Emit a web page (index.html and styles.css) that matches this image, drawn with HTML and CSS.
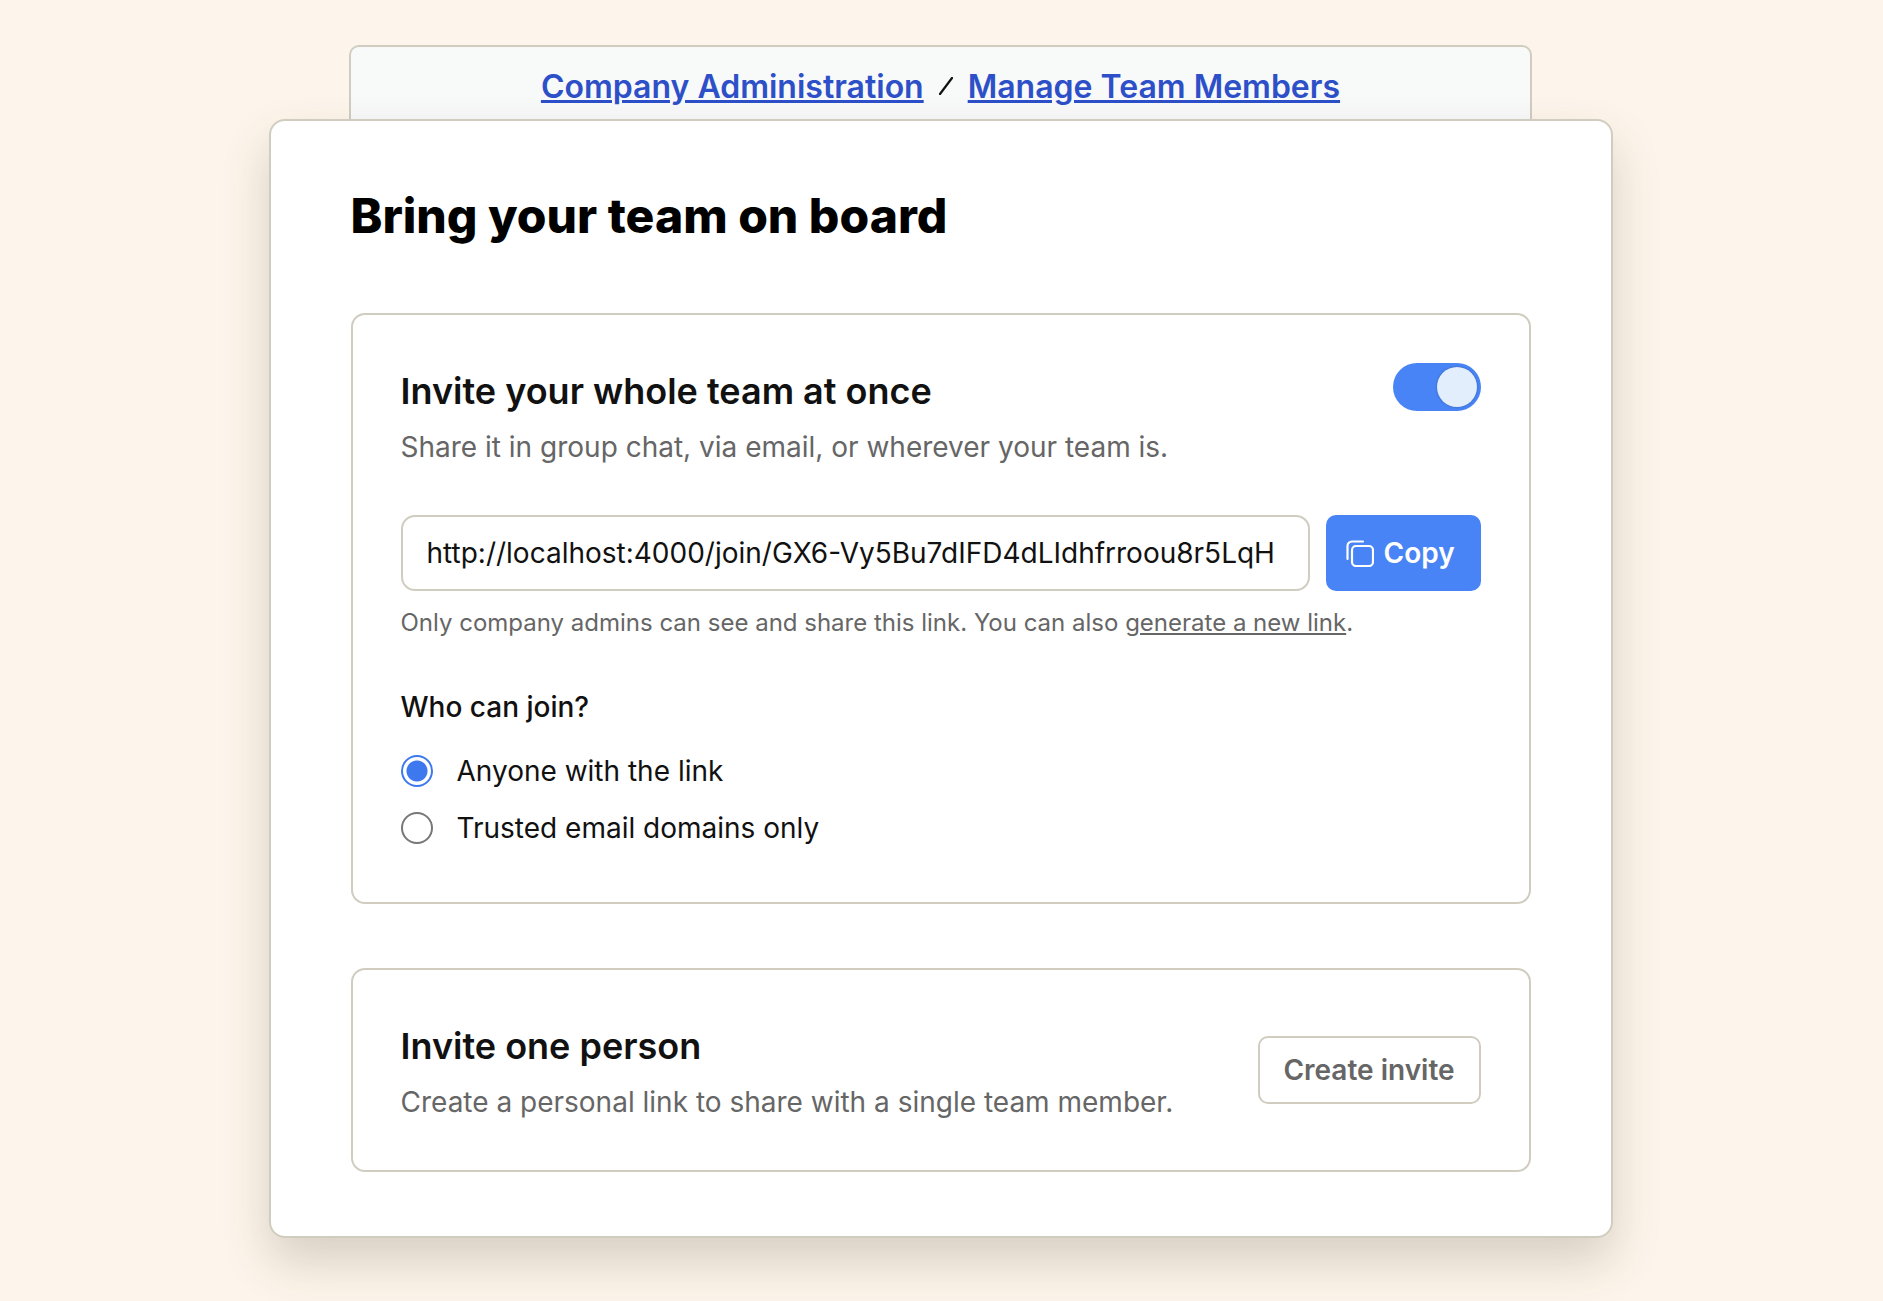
FILE: index.html
```html
<!DOCTYPE html>
<html lang="en">
<head>
  <meta charset="UTF-8" />
  <meta name="viewport" content="width=device-width, initial-scale=1.0" />
  <title>Bring your team on board</title>
  <link rel="stylesheet" href="styles.css">
</head>
<body>
  <nav class="crumbs">
    <a href="#">Company Administration</a>
    <svg class="crumb-sep" viewBox="0 0 14 18" fill="none" stroke="#111" stroke-width="2.2" stroke-linecap="round"><path d="M1 17L13 1"></path></svg>
    <a href="#">Manage Team Members</a>
  </nav>

  <main class="sheet">
    <h1>Bring your team on board</h1>

    <section class="panel panel-link">
      <div class="panel-head">
        <div class="panel-text">
          <h2>Invite your whole team at once</h2>
          <p class="panel-sub">Share it in group chat, via email, or wherever your team is.</p>
        </div>
        <div class="toggle"><span class="toggle-knob"></span></div>
      </div>

      <div class="link-row">
        <div class="link-input">http://localhost:4000/join/GX6-Vy5Bu7dIFD4dLIdhfrroou8r5LqH</div>
        <button type="button" class="btn-copy">
          <svg class="copy-icon" viewBox="0 0 28 27" fill="none" stroke="currentColor" stroke-width="2.2" stroke-linecap="round" stroke-linejoin="round">
            <rect x="6" y="6" width="21" height="20" rx="4"></rect>
            <path d="M1.5 19V6a4.5 4.5 0 0 1 4.5-4.5h11"></path>
          </svg>
          Copy
        </button>
      </div>
      <p class="link-note">Only company admins can see and share this link. You can also <a href="#">generate a new link</a>.</p>

      <h3>Who can join?</h3>
      <div class="radio-row"><span class="radio radio-on"></span>Anyone with the link</div>
      <div class="radio-row"><span class="radio"></span>Trusted email domains only</div>
    </section>

    <section class="panel panel-one">
      <div class="panel-text">
        <h2>Invite one person</h2>
        <p class="panel-sub">Create a personal link to share with a single team member.</p>
      </div>
      <button type="button" class="btn-outline">Create invite</button>
    </section>
  </main>
</body>
</html>
```

FILE: styles.css
```css
body {
  font-family: Inter, sans-serif;
  background: #fdf5eb;
  margin: 0;
  padding: 45px 2px 0 0;
  display: flex;
  flex-direction: column;
  align-items: center;
  color: #111;
  min-height: 1256px;
  overflow: hidden;
}

.crumbs {
  width: 1183px;
  height: 74px;
  box-sizing: border-box;
  padding-top: 6px;
  background: #f8f9f9;
  border: 2px solid #d0cdc0;
  border-bottom: none;
  border-radius: 10px 10px 0 0;
  display: flex;
  justify-content: center;
  align-items: center;
  gap: 15px;
  font-size: 32px;
  font-weight: 600;
}

.crumbs a {
  color: #2d50c8;
}

.crumb-sep {
  width: 14px;
  height: 18px;
}

.sheet {
  width: 1344px;
  height: 1119px;
  box-sizing: border-box;
  background: #fff;
  border: 2px solid #d0cdc0;
  border-radius: 16px;
  padding: 65px 80px;
  box-shadow: 0 24px 48px rgba(70, 60, 40, 0.2);
}

h1 {
  margin: 0 0 67px;
  font-size: 48px;
  line-height: 60px;
  font-weight: 800;
  color: #000;
}

.panel {
  box-sizing: border-box;
  border: 2px solid #d0cdc0;
  border-radius: 14px;
  padding: 48px 48px;
}

.panel-link {
  height: 591px;
  margin-bottom: 64px;
}

.panel-one {
  height: 204px;
  display: flex;
  justify-content: space-between;
  align-items: center;
}

.panel-head {
  display: flex;
  justify-content: space-between;
  align-items: flex-start;
}

.panel-link .panel-text {
  padding-top: 6px;
}

.panel-one .panel-text {
  padding-top: 8px;
}

h2 {
  margin: 0;
  font-size: 36px;
  line-height: 44px;
  font-weight: 600;
  color: #111;
}

.panel-sub {
  margin: 12px 0 0;
  font-size: 28px;
  line-height: 44px;
  color: #666;
}

.toggle {
  width: 88px;
  height: 48px;
  border-radius: 24px;
  background: #4884f5;
  display: flex;
  justify-content: flex-end;
  align-items: center;
  padding-right: 4px;
  box-sizing: border-box;
}

.toggle-knob {
  width: 40px;
  height: 40px;
  border-radius: 50%;
  background: #e2eefc;
  box-shadow: 0 0 2px rgba(40, 60, 110, 0.6);
}

.link-row {
  display: flex;
  gap: 16px;
  margin-top: 46px;
}

.link-input {
  flex: 1;
  height: 76px;
  box-sizing: border-box;
  border: 2px solid #d0cdc0;
  border-radius: 14px;
  padding: 0 24px;
  display: flex;
  align-items: center;
  font-size: 28px;
  white-space: nowrap;
  color: #111;
}

.btn-copy {
  width: 155px;
  height: 76px;
  border: none;
  border-radius: 10px;
  background: #4884f5;
  color: #fff;
  padding: 0 0 0 20px;
  font-family: inherit;
  font-size: 28px;
  font-weight: 600;
  display: flex;
  align-items: center;
  gap: 10px;
}

.copy-icon {
  width: 28px;
  height: 27px;
}

.link-note {
  margin: 14px 0 0;
  font-size: 24px;
  line-height: 36px;
  color: #666;
}

.link-note a {
  color: #666;
}

h3 {
  margin: 48px 0 17px;
  font-size: 28px;
  line-height: 36px;
  font-weight: 500;
  color: #111;
}

.radio-row {
  display: flex;
  align-items: center;
  gap: 24px;
  height: 57px;
  font-size: 28px;
  color: #111;
}

.radio {
  width: 32px;
  height: 32px;
  box-sizing: border-box;
  border: 2px solid #777;
  border-radius: 50%;
}

.radio-on {
  border-color: #3d78ee;
  background: radial-gradient(circle, #3d78ee 0 10px, #fff 11px);
}

.btn-outline {
  width: 223px;
  height: 68px;
  background: #fff;
  border: 2px solid #d0cdc0;
  border-radius: 10px;
  font-family: inherit;
  font-size: 28px;
  font-weight: 600;
  color: #666;
}
```
